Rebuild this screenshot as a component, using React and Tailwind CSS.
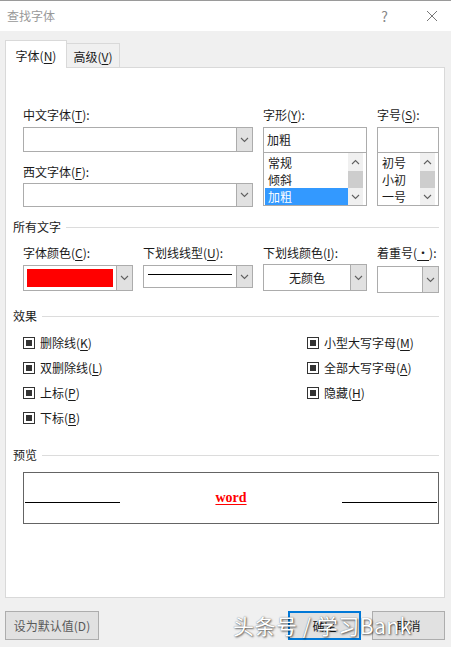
import React from 'react';

const Chevron = ({ dir = 'down' }) => (
  <svg width="9" height="6" viewBox="0 0 9 6" className={dir === 'up' ? 'rotate-180' : ''}>
    <path d="M1 1l3.5 3.5L8 1" fill="none" stroke="#606060" strokeWidth="1.1" />
  </svg>
);

const Combo = ({ className = '', children }) => (
  <div className={`flex border border-[#acacac] bg-white ${className}`}>
    <div className="flex-1 flex items-center min-w-0">{children}</div>
    <div className="w-[16px] bg-[#e1e1e1] border-l border-[#acacac] flex items-center justify-center">
      <Chevron />
    </div>
  </div>
);

const Key = ({ k }) => <u className="underline underline-offset-2">{k}</u>;

const Heading = ({ children }) => (
  <div className="flex items-center gap-[5px] leading-[18px]">
    <span>{children}</span>
    <div className="flex-1 h-px bg-[#dcdcdc]" />
  </div>
);

const Check = ({ label, k }) => (
  <div className="flex items-center gap-[5px] leading-[18px] h-[18px]">
    <div className="w-[12px] h-[12px] border border-[#333] flex items-center justify-center">
      <div className="w-[6px] h-[6px] bg-[#333]" />
    </div>
    <span>
      {label}(<Key k={k} />)
    </span>
  </div>
);

function ListBox({ items, selected, className = '' }) {
  return (
    <div className={`flex border border-[#acacac] bg-white h-[54px] ${className}`}>
      <div className="flex-1 flex flex-col pt-px pl-px">
        {items.map((it) => (
          <div
            key={it}
            className={`h-[17px] leading-[17px] pl-[3px] ${it === selected ? 'bg-[#3399ff] text-white' : ''}`}
          >
            {it}
          </div>
        ))}
      </div>
      <div className="w-[15px] mr-[3px] bg-[#f0f0f0] flex flex-col">
        <div className="h-[18px] flex items-center justify-center">
          <Chevron dir="up" />
        </div>
        <div className="h-[17px] bg-[#cdcdcd]" />
        <div className="flex-1 flex items-center justify-center">
          <Chevron />
        </div>
      </div>
    </div>
  );
}

export default function App() {
  return (
    <div className="relative w-[451px] h-[647px] bg-[#f0f0f0] text-[12px] text-[#1a1a1a] font-['Noto_Sans_CJK_SC',sans-serif] overflow-hidden">
      {/* Title bar */}
      <div className="h-[31px] bg-white border-t border-[#9a9a9a] flex items-center pl-[7px] pr-[13px]">
        <span className="text-[#999] text-[12px] leading-[18px]">查找字体</span>
        <span className="ml-auto text-[#888] text-[14px] mr-[38px]">?</span>
        <svg width="12" height="12" viewBox="0 0 12 12">
          <path d="M1 1l10 10M11 1L1 11" stroke="#777" strokeWidth="1" />
        </svg>
      </div>

      <div className="pt-[9px] pl-[5px] pr-[6px]">
        {/* Tabs */}
        <div className="flex items-end h-[28px] relative z-10 -mb-px">
          <div className="w-[62px] h-[28px] bg-white border border-b-0 border-[#d9d9d9] flex items-center justify-center leading-[18px] pt-[2px]">
            字体(<Key k="N" />)
          </div>
          <div className="w-[53px] h-[25px] bg-[#f0f0f0] border border-l-0 border-[#d9d9d9] flex items-center justify-center leading-[18px] pt-[3px]">
            高级(<Key k="V" />)
          </div>
        </div>

        {/* Panel */}
        <div className="bg-white border border-[#d9d9d9] h-[531px] pl-[7px] pr-[5px] pt-[38px]">
          <div className="ml-[10px] flex gap-[10px]">
            <div className="w-[230px] flex flex-col">
              <div className="leading-[18px]">中文字体(<Key k="T" />):</div>
              <Combo className="mt-[3px] h-[25px]" />
              <div className="leading-[18px] mt-[11px]">西文字体(<Key k="F" />):</div>
              <Combo className="mt-[2px] h-[24px]" />
            </div>
            <div className="w-[104px] flex flex-col">
              <div className="leading-[18px]">字形(<Key k="Y" />):</div>
              <div className="mt-[3px] h-[25px] border border-[#acacac] border-b-0 flex items-center pl-[3px]">加粗</div>
              <ListBox items={['常规', '倾斜', '加粗']} selected="加粗" />
            </div>
            <div className="w-[62px] flex flex-col">
              <div className="leading-[18px]">字号(<Key k="S" />):</div>
              <div className="mt-[3px] h-[25px] border border-[#acacac] border-b-0" />
              <ListBox items={['初号', '小初', '一号']} />
            </div>
          </div>

          {/* All text */}
          <div className="mt-[11px]">
            <Heading>所有文字</Heading>
          </div>
          <div className="ml-[10px] mt-[8px] flex gap-[10px] items-start">
            <div className="w-[110px] flex flex-col">
              <div className="leading-[18px]">字体颜色(<Key k="C" />):</div>
              <Combo className="mt-[3px] h-[26px]">
                <div className="mx-[3px] h-[18px] flex-1 bg-[#ff0000]" />
              </Combo>
            </div>
            <div className="w-[110px] flex flex-col">
              <div className="leading-[18px]">下划线线型(<Key k="U" />):</div>
              <Combo className="mt-[3px] h-[23px]">
                <div className="mx-[4px] mb-[4px] h-px flex-1 bg-black" />
              </Combo>
            </div>
            <div className="w-[104px] flex flex-col">
              <div className="leading-[18px]">下划线颜色(<Key k="I" />):</div>
              <Combo className="mt-[2px] h-[27px]">
                <div className="flex-1 text-center">无颜色</div>
              </Combo>
            </div>
            <div className="w-[62px] flex flex-col">
              <div className="leading-[18px]">着重号(<Key k="·" />):</div>
              <Combo className="mt-[4px] h-[27px]" />
            </div>
          </div>

          {/* Effects */}
          <div className="mt-[14px]">
            <Heading>效果</Heading>
          </div>
          <div className="ml-[10px] mt-[9px] grid grid-cols-[284px_1fr] gap-y-[7px]">
            <Check label="删除线" k="K" />
            <Check label="小型大写字母" k="M" />
            <Check label="双删除线" k="L" />
            <Check label="全部大写字母" k="A" />
            <Check label="上标" k="P" />
            <Check label="隐藏" k="H" />
            <Check label="下标" k="B" />
          </div>

          {/* Preview */}
          <div className="mt-[19px]">
            <Heading>预览</Heading>
          </div>
          <div className="ml-[10px] mt-[8px] h-[52px] border border-[#646464] flex items-end pb-[20px] px-px">
            <div className="w-[95px] h-px bg-black" />
            <div className="flex-1 flex justify-center">
              <span className="text-[#ff0000] font-bold text-[14px] leading-[16px] underline underline-offset-[2px] font-['Liberation_Serif',serif] mb-[-3px]">
                word
              </span>
            </div>
            <div className="w-[95px] h-px bg-black" />
          </div>
        </div>

        {/* Buttons */}
        <div className="mt-[13px] flex items-center">
          <div className="w-[94px] h-[29px] bg-[#e1e1e1] border border-[#adadad] flex items-center justify-center text-[#5a5a5a]">
            设为默认值(D)
          </div>
          <div className="ml-auto w-[73px] h-[29px] bg-[#e1e1e1] border-2 border-[#0078d7] flex items-center justify-center">
            确定
          </div>
          <div className="ml-[11px] w-[73px] h-[29px] bg-[#e1e1e1] border border-[#adadad] flex items-center justify-center">
            取消
          </div>
        </div>
      </div>

      {/* Watermark */}
      <div className="absolute left-[233px] top-[610px] text-white text-[21px] leading-[30px] tracking-[0.5px] [text-shadow:1px_1px_2px_rgba(0,0,0,0.6),0_0_1px_rgba(0,0,0,0.5)]">
        头条号 / 学习Bank
      </div>
    </div>
  );
}
